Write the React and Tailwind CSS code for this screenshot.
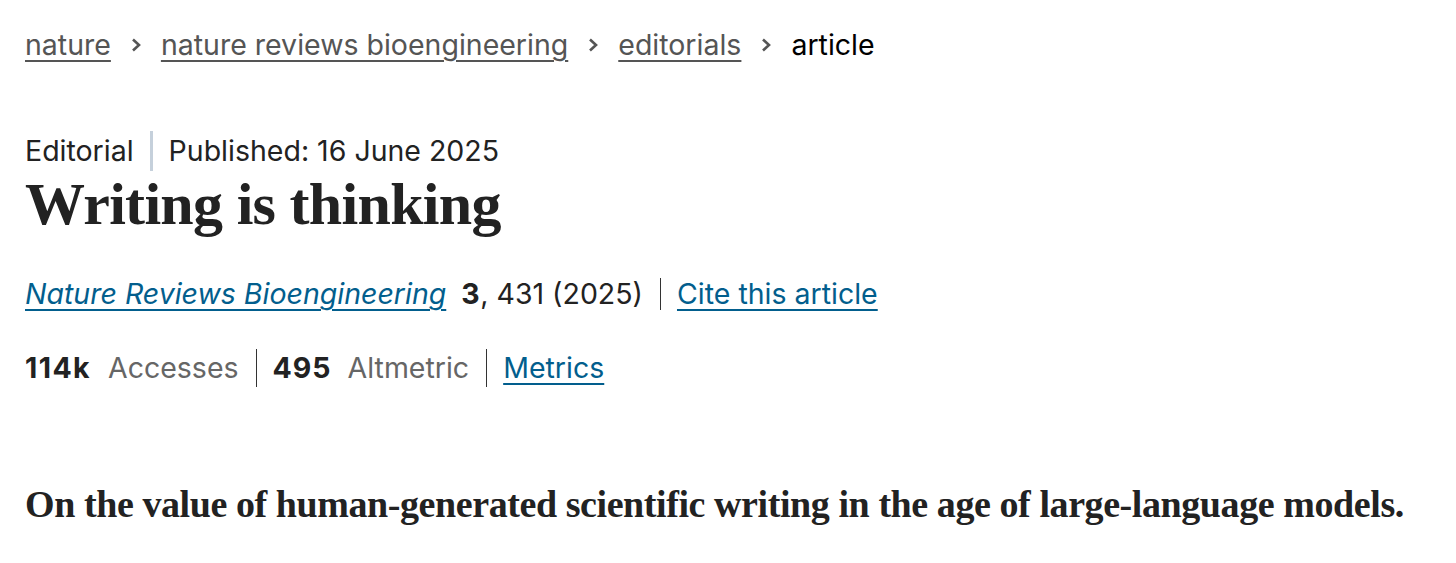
import React from 'react';

const sans = { fontFamily: 'Inter, "Noto Sans", sans-serif' };
const serif = { fontFamily: '"Liberation Serif", "DejaVu Serif", serif' };

function Chevron() {
    return (
        <svg width="12" height="16" viewBox="0 0 12 16" className="mx-[19px] shrink-0" aria-hidden="true">
            <path d="M3 2.5 L9 8 L3 13.5" fill="none" stroke="#555" strokeWidth="2.6" />
        </svg>
    );
}

function Sep({ h = 'h-[34px]' }) {
    return <span className={`inline-block w-px ${h} ml-[17px] mr-[16px] bg-[#333]`} />;
}

export default function App() {
    const crumbs = ['nature', 'nature reviews bioengineering', 'editorials'];

    return (
        <div className="w-[1456px] h-[563px] bg-white text-[#222] overflow-hidden pl-[25px]" style={sans}>
            {/* breadcrumb */}
            <nav className="flex items-center pt-[27px] text-[28.5px] leading-[36px]">
                {crumbs.map((c) => (
                    <React.Fragment key={c}>
                        <a href="#" className="text-[#555] underline underline-offset-[5px] decoration-[1.5px]">{c}</a>
                        <Chevron />
                    </React.Fragment>
                ))}
                <span className="text-black">article</span>
            </nav>

            {/* type + date */}
            <div className="flex items-center mt-[68px] text-[28.5px] leading-[40px]">
                <span>Editorial</span>
                <span className="inline-block w-[3px] h-[40px] ml-[16px] mr-[16px] bg-[#c5d0db]" />
                <span>Published: 16 June 2025</span>
            </div>

            {/* title */}
            <h1 className="text-[60px] leading-[66px] font-bold tracking-[-0.7px] text-[#222]" style={serif}>
                Writing is thinking
            </h1>

            {/* citation */}
            <div className="flex items-center mt-[37px] text-[28.5px] leading-[40px]">
                <a href="#" className="italic text-[#025e8d] underline underline-offset-[5px] decoration-[1.5px]">Nature Reviews Bioengineering</a>
                <span className="ml-[15px]"><b className="tracking-[0.6px]">3</b>, 431 (2025)</span>
                <Sep h="h-[32px]" />
                <a href="#" className="text-[#025e8d] underline underline-offset-[5px] decoration-[1.5px]">Cite this article</a>
            </div>

            {/* metrics */}
            <div className="flex items-center mt-[34px] text-[28.5px] leading-[40px]">
                <b className="tracking-[1.4px]">114k</b>
                <span className="ml-[17px] text-[#666]">Accesses</span>
                <Sep h="h-[38px]" />
                <b className="tracking-[1px]">495</b>
                <span className="ml-[16px] text-[#666]">Altmetric</span>
                <Sep h="h-[38px]" />
                <a href="#" className="text-[#025e8d] underline underline-offset-[5px] decoration-[1.5px]">Metrics</a>
            </div>

            {/* standfirst */}
            <p className="mt-[94px] text-[38px] leading-[44px] font-bold text-[#222] tracking-[-0.42px] whitespace-nowrap" style={serif}>
                On the value of human-generated scientific writing in the age of large-language models.
            </p>
        </div>
    );
}
